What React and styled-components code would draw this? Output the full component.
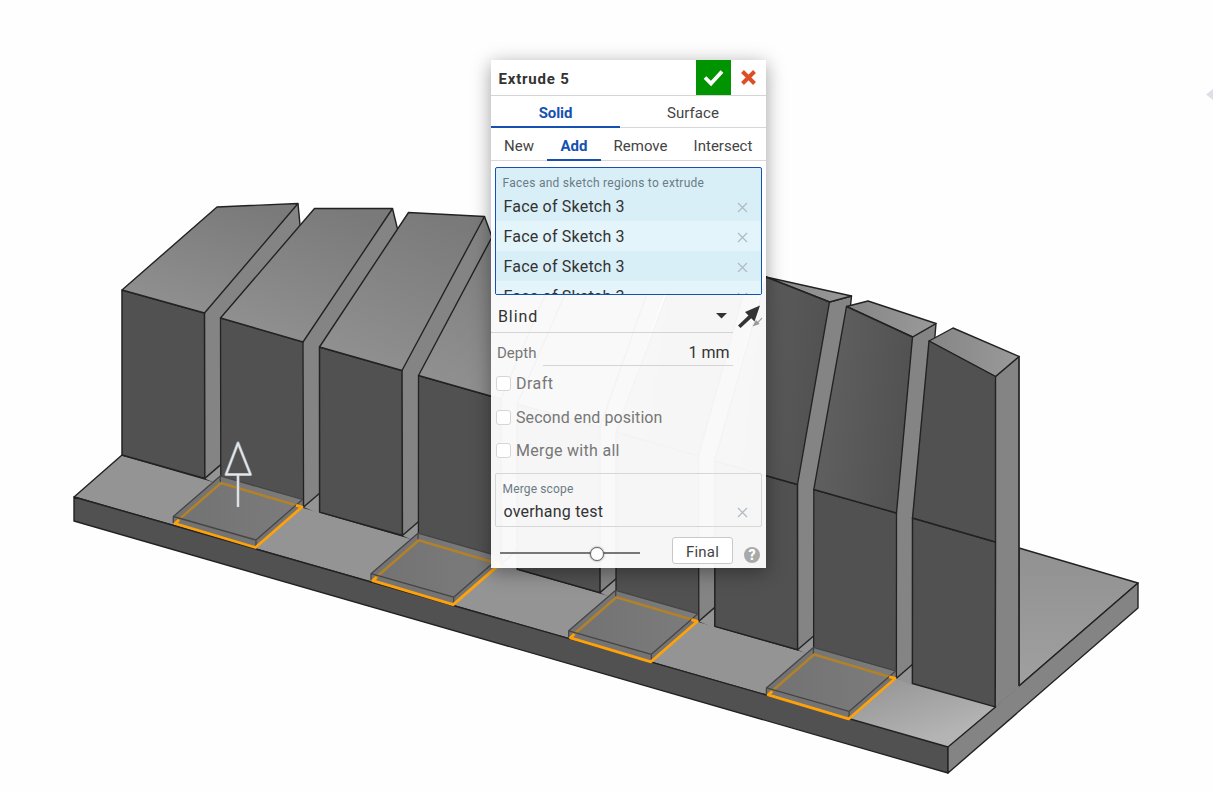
import React from 'react';
import styled, { createGlobalStyle } from 'styled-components';

const Global = createGlobalStyle`
  * { box-sizing: border-box; }
  body { margin: 0; background: #fff; overflow: hidden; }
`;

const Workspace = styled.main`
  position: relative;
  width: 1213px;
  height: 792px;
  overflow: hidden;
  background: #fefefe;
  font-family: Roboto, "Liberation Sans", sans-serif;
  color: #333;
`;

const Canvas = styled.svg`
  display: block;
`;

const Dialog = styled.section`
  position: absolute;
  left: 491px;
  top: 60px;
  width: 275px;
  height: 508px;
  display: flex;
  flex-direction: column;
  background: rgba(255, 255, 255, 0.95);
  box-shadow: 0 4px 18px rgba(0, 0, 0, 0.38);
`;

const Header = styled.header`
  display: flex;
  height: 36px;
  background: #fff;
  border-bottom: 1px solid #d5d5d5;
`;

const Title = styled.h1`
  flex: 1;
  margin: 0;
  padding-left: 7.5px;
  font-size: 15px;
  line-height: 38px;
  font-weight: 700;
  letter-spacing: 0.8px;
`;

const HeaderButton = styled.button`
  width: 35px;
  height: 35px;
  padding: 0;
  border: 0;
  background: ${(p) => (p.$accept ? '#009500' : 'transparent')};
  svg { display: block; }
`;

const Tabs = styled.nav`
  display: flex;
  height: ${(p) => p.$height}px;
  background: #fff;
  border-bottom: 1px solid #d8d8d8;
`;

const Tab = styled.div`
  width: ${(p) => p.$width}px;
  height: ${(p) => p.$height}px;
  text-align: center;
  font-size: 15px;
  line-height: ${(p) => p.$height + 2 + (p.$height % 2)}px;
  white-space: nowrap;
  letter-spacing: ${(p) => p.$spacing || 0}px;
  color: ${(p) => (p.$active ? '#1651b0' : '#444')};
  font-weight: ${(p) => (p.$active ? 700 : 400)};
  border-bottom: ${(p) => (p.$active ? '2px solid #1651b0' : '0')};
`;

const Selection = styled.div`
  margin: 6px 4px 0;
  height: ${(p) => (p.$active ? 128 : 54)}px;
  flex: none;
  overflow: hidden;
  border: 1px solid ${(p) => (p.$active ? '#1651b0' : '#d6d6d6')};
  border-radius: 2px;
  background: ${(p) => (p.$active ? '#d9eff8' : 'transparent')};
`;

const Caption = styled.div`
  height: ${(p) => p.$height || 23}px;
  padding-left: 6.5px;
  line-height: 30px;
  font-size: 12px;
  letter-spacing: ${(p) => p.$spacing}px;
  color: #6b7b84;
  white-space: nowrap;
`;

const Item = styled.div`
  display: flex;
  justify-content: space-between;
  align-items: center;
  height: 30px;
  padding: 0 13.5px 0 7.5px;
  font-size: 16px;
  letter-spacing: 0.2px;
  background: ${(p) => (p.$alt ? '#e3f4fb' : 'transparent')};
  svg { margin-top: 2px; }
`;

const SelectRow = styled.div`
  display: flex;
  align-items: flex-start;
  height: 38px;
`;

const Select = styled.div`
  display: flex;
  justify-content: space-between;
  align-items: center;
  width: 242px;
  height: 38px;
  padding: 5px 6.5px 0 7px;
  border-bottom: 1px solid #d4d4d4;
  font-size: 16px;
  letter-spacing: 0.9px;
`;

const DepthRow = styled.div`
  display: flex;
  height: 33px;
  padding-left: 6px;
  color: #777;
  font-size: 15px;
  line-height: 40px;
`;

const DepthLabel = styled.label`
  width: 46px;
`;

const DepthValue = styled.div`
  width: 190px;
  padding-right: 3.5px;
  border-bottom: 1px solid #d4d4d4;
  text-align: right;
  font-size: 16px;
  color: #333;
`;

const Options = styled.div`
  display: flex;
  flex-direction: column;
  padding: 1px 0 0 5px;
`;

const Option = styled.label`
  display: flex;
  align-items: center;
  gap: 5px;
  height: 33.4px;
  font-size: 16px;
  letter-spacing: ${(p) => p.$spacing}px;
  color: #777;
`;

const Checkbox = styled.span`
  width: 15px;
  height: 15px;
  border: 1px solid #d6d6d6;
  border-radius: 3px;
  background: #fff;
`;

const Footer = styled.footer`
  display: flex;
  height: 41px;
  padding: 10px 6px 0 9px;
`;

const Slider = styled.div`
  width: 140px;
  height: 33px;
  display: flex;
  align-items: center;
  background: linear-gradient(#777, #777) 0 15px / 140px 2px no-repeat;
`;

const Thumb = styled.span`
  width: 14px;
  height: 14px;
  margin-left: 90px;
  border: 1px solid #666;
  border-radius: 50%;
  background: #fff;
  box-shadow: 0 0 2px rgba(0, 0, 0, 0.5);
`;

const FinalButton = styled.button`
  width: 61px;
  height: 27px;
  margin-left: 32px;
  padding: 2px 0 0;
  border: 1px solid #c9c9c9;
  border-radius: 3px;
  background: #fff;
  color: #444;
  font: 15px Roboto, sans-serif;
  letter-spacing: 0.2px;
`;

const Help = styled.span`
  width: 16px;
  height: 16px;
  margin: 9.5px 0 0 11px;
  border-radius: 50%;
  background: #a9a9a9;
  color: #fff;
  font-size: 14px;
  font-weight: 900;
  line-height: 17px;
  text-align: center;
`;

const Cross = () => (
  <svg width="11" height="11" viewBox="0 0 11 11">
    <path d="M1 1l9 9M10 1l-9 9" stroke="#aebbc1" strokeWidth="1.2" fill="none" />
  </svg>
);

const SIDE = '#848484';
const FRONT = '#515151';
const DX = 98.8;
const DY = 28.56;

// Each block: top outline, optional sloping front facet, front wall and right side, in screen units.
const blocks = [
  { top: [[122, 290], [217, 207], [298, 203.5], [204.5, 313]], ridge: 'M217 207Q258 203.5 298 203.5', back: [300, 225] },
  { top: [[220.5, 318], [314.5, 208.5], [392.5, 208.5], [303, 342]], back: [397.5, 229] },
  { top: [[319.5, 347], [408.5, 212.5], [484.5, 216.5], [402, 370.5]], back: [492, 237] },
  { top: [[418.5, 375.5], [501, 220], [573, 229], [501, 399]], back: [581, 256] },
  { top: [[517.3, 404], [592, 232], [664, 245], [600, 427]], back: [672, 274] },
  { facet: [[616, 432], [684, 248], [749, 273], [698.5, 456]], ridge: [[684, 248], [758, 268]], back: [762, 284] },
  { facet: [[714.8, 461], [766, 277], [829.5, 302], [797.5, 484.5]], ridge: [[766, 277], [851.5, 296]], back: [850.5, 306] },
  { facet: [[813.8, 489.5], [846.5, 306.5], [912.5, 337], [896.5, 513]], ridge: [[868, 301], [936, 323.5]], back: [934.8, 338] },
  { facet: [[912.5, 518], [929, 341], [995.5, 376.5], [995.5, 542]], ridge: [[953, 328], [1019, 356.5]], back: [1019, 686] },
];

const pts = (a) => a.map((p) => p.join(',')).join(' ');

function Block({ b, i }) {
  const x = 122 + DX * i;
  const y = 455 + DY * i;
  const last = i === 8;
  const odd = i % 2 === 1;
  const bl = [x, y];
  const br = [x + 82.8, y + 23.4];
  const wall = b.top || b.facet;
  const [l, tl, tr, r] = wall;
  const sideTop = b.facet ? b.ridge[1] : tr;
  const gapEnd = [x + DX, y + 9.6];
  const next = blocks[i + 1];
  const nextWall = next && (next.top || next.facet);
  const side = last
    ? [[995.5, 376.5], [1019, 356.5], [1019, 687], [995.5, 707]]
    : [r, tr, sideTop, b.back, nextWall[1], nextWall[0], gapEnd, br];
  // The next block's corner bounds the side face below the point where they meet.
  const visibleSide = last ? side : [r, tr, sideTop, b.back, nextWall[0], gapEnd, br];
  return (
    <g strokeLinejoin="round">
      {!last && <polygon points={pts([br, gapEnd, [x + DX, y + DY + 2]])} fill="#949494" />}
      <polygon points={pts(visibleSide)} fill={SIDE} />
      <g stroke="#222" strokeWidth="1.4" fill="none">
        {!last && <path d={`M${br}L${gapEnd}`} />}
        <path d={`M${tr}L${sideTop}L${b.back}`} />
        <polygon points={pts([l, r, br, bl])} fill={FRONT} strokeWidth={odd ? 1.3 : 1.5} />
        {b.facet && <polygon points={pts([tl, b.ridge[0], b.ridge[1], tr])} fill="url(#cap)" />}
        <polygon points={pts(wall)} fill={b.top ? 'url(#roof)' : i > 7 ? FRONT : 'url(#slope)'} />
      </g>
    </g>
  );
}

const Plate = ({ n }) => (
  <g transform={`translate(${n * 197.7} ${n * 57.15})`} strokeLinejoin="round">
    <polygon points="173.3,516.5 220.3,476 302.5,499.5 302.5,507 256,547 173.3,523" fill="#747474" />
    <polygon points="173.3,516.5 220.3,476 302.5,499.5 256,540" fill="url(#plate)" />
    <path d="M175 523L221 483L302 507" fill="none" stroke="#b1812b" strokeWidth="2.6" />
    <path d="M173.3 523V516.5L220.3 476L302.5 499.5L256 540L173.3 516.5M256 540V546M220.3 476V482" fill="none" stroke="#454545" strokeWidth="1.3" />
    <path d="M179 520L175 523.5L255.5 547.5L302 507L296 505.3" fill="none" stroke="#ffa20a" strokeWidth="2.8" />
  </g>
);

function Model() {
  return (
    <Canvas width="1213" height="792" viewBox="0 0 1213 792">
      <defs>
        <linearGradient id="roof" x1="0.2" y1="1" x2="0.7" y2="0">
          <stop stopColor="#919191" /><stop offset="1" stopColor="#7a7a7a" />
        </linearGradient>
        <linearGradient id="cap"><stop stopColor="#858585" /><stop offset="1" stopColor="#9a9a9a" /></linearGradient>
        <linearGradient id="slope" x1="0" y1="0.7" x2="0.9" y2="0.9">
          <stop stopColor="#606060" /><stop offset="1" stopColor="#515151" />
        </linearGradient>
        <linearGradient id="plate"><stop stopColor="#727272" /><stop offset="1" stopColor="#7c7c7c" /></linearGradient>
        <linearGradient id="floor" gradientUnits="userSpaceOnUse" x1="890" y1="670" x2="915" y2="745">
          <stop stopColor="#949494" /><stop offset="1" stopColor="#b4b4b4" />
        </linearGradient>
        <linearGradient id="rear" x1="0" y1="0" x2="0" y2="1"><stop stopColor="#919191" /><stop offset="1" stopColor="#a0a0a0" /></linearGradient>
      </defs>
      <g stroke="#222" strokeWidth="1.4" strokeLinejoin="round">
        <polygon points="1019,548 1138,583 1019,686" fill="url(#rear)" />
        <polygon points="74,497 122,455 995.5,707 948,747" fill="#949494" />
        <polygon points="780,699 850,665 995.5,707 948,747" fill="url(#floor)" stroke="none" />
        <polygon points="74,497 948,747 948,773 74,521" fill={FRONT} />
        <polygon points="948,747 995.5,707 1019,686 1138,583 1138,608 948,773" fill={SIDE} />
      </g>
      {blocks.map((b, i) => <Block key={i} b={b} i={i} />)}
      <path d="M1019 356V686" stroke="#2a2a2a" strokeWidth="1.3" />
      <path d="M996.3 706L1018.5 686.8L1018.5 690L997 709Z" fill={SIDE} />
      {[0, 1, 2, 3].map((n) => <Plate key={n} n={n} />)}
      <g fill="none" strokeLinejoin="round">
        <path d="M238 443L226 474.5H250.5ZM238 475V507" stroke="#9aa1a6" strokeWidth="3.2" />
        <path d="M238 443L226 474.5H250.5ZM238 475V507" stroke="#e4e8eb" strokeWidth="1.8" />
      </g>
      <path d="M1213 89L1206 94.5L1213 100Z" fill="#dfdfea" />
    </Canvas>
  );
}

export default function App() {
  return (
    <Workspace>
      <Global />
      <Model />
      <Dialog>
        <Header>
          <Title>Extrude 5</Title>
          <HeaderButton $accept aria-label="Accept">
            <svg width="35" height="35"><path d="M9 17.5L15 23.5L26 11.5" fill="none" stroke="#fff" strokeWidth="3.8" /></svg>
          </HeaderButton>
          <HeaderButton aria-label="Cancel">
            <svg width="35" height="35"><path d="M11.5 11.5L23.5 23.5M23.5 11.5L11.5 23.5" stroke="#dc4f25" strokeWidth="4" /></svg>
          </HeaderButton>
        </Header>
        <Tabs $height={32}>
          <Tab $active $width={129} $height={32} $spacing={-0.1}>Solid</Tab>
          <Tab $width={146} $height={32} $spacing={0.1}>Surface</Tab>
        </Tabs>
        <Tabs $height={33}>
          <Tab $width={56} $height={33}>New</Tab>
          <Tab $active $width={54} $height={33}>Add</Tab>
          <Tab $width={79} $height={33}>Remove</Tab>
          <Tab $width={86} $height={33}>Intersect</Tab>
        </Tabs>
        <Selection $active>
          <Caption $spacing={0.27}>Faces and sketch regions to extrude</Caption>
          {[0, 1, 2, 3].map((n) => (
            <Item key={n} $alt={n % 2 === 1}>Face of Sketch 3<Cross /></Item>
          ))}
        </Selection>
        <SelectRow>
          <Select>
            Blind
            <svg width="11" height="6"><path d="M0 0H11L5.5 5.5Z" fill="#333" /></svg>
          </Select>
          <svg width="33" height="38">
            <path d="M27 10.5L21.5 26.5L18.2 23.2L7.5 33L5 30.5L15.5 20.5L12 17Z" fill="#333" />
            <path d="M28.8 22.5L24.7 26.7L23 25L19.5 31.5L26.5 29L25.5 27.5L29.2 23.7Z" fill="#999" />
          </svg>
        </SelectRow>
        <DepthRow>
          <DepthLabel>Depth</DepthLabel>
          <DepthValue>1 mm</DepthValue>
        </DepthRow>
        <Options>
          <Option $spacing={0.45}><Checkbox />Draft</Option>
          <Option $spacing={0.08}><Checkbox />Second end position</Option>
          <Option $spacing={0.3}><Checkbox />Merge with all</Option>
        </Options>
        <Selection $active={false}>
          <Caption $height={22} $spacing={0.15}>Merge scope</Caption>
          <Item>overhang test<Cross /></Item>
        </Selection>
        <Footer>
          <Slider><Thumb /></Slider>
          <FinalButton>Final</FinalButton>
          <Help>?</Help>
        </Footer>
      </Dialog>
    </Workspace>
  );
}
